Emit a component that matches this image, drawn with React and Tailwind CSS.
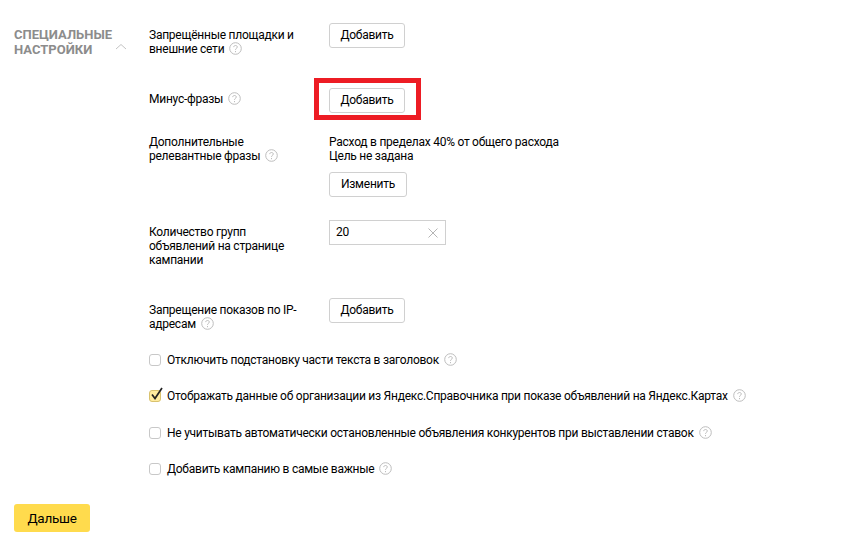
import React from "react";

const Help = ({ className = "" }) => (
  <svg width="13" height="13" viewBox="0 0 13 13" fill="none" className={`inline-block align-[-2px] ml-[5px] ${className}`}>
    <circle cx="6.5" cy="6.5" r="5.8" stroke="#bdbdbd" />
    <path d="M4.7 5.1c0-1 .8-1.6 1.8-1.6s1.8.6 1.8 1.5c0 1.400-1.800 1.300-1.800 2.800" stroke="#bdbdbd" />
    <path d="M6.500 9v1.200" stroke="#bdbdbd" />
  </svg>
);

const Btn = ({ children, className = "" }) => (
  <button className={`h-[25px] rounded-[3px] border border-[#d0d0d0] bg-white pb-[2px] text-[12px] leading-[14px] tracking-[-0.25px] text-black ${className}`}>
    {children}
  </button>
);

const Check = ({ checked, children, className = "" }) => (
  <div className={`flex h-[14px] items-center ${className}`}>
    <span className={`relative mr-[6px] h-[12px] w-[12px] shrink-0 rounded-[3px] border ${checked ? "border-[#d9c26e] bg-[#ffeba0]" : "border-[#c8c8c8] bg-white"}`}>
      {checked && (
        <svg width="16" height="16" viewBox="0 0 16 16" fill="none" className="absolute left-[-1px] top-[-5px]">
          <path d="M3 8.500L6 12.500L13 2" stroke="#222" strokeWidth="1.700" />
        </svg>
      )}
    </span>
    <span className="whitespace-nowrap">{children}</span>
  </div>
);

export default function App() {
  return (
    <div className="relative h-[539px] w-[867px] overflow-hidden bg-white font-['Roboto',sans-serif] text-[12px] leading-[14px] tracking-[-0.25px] text-black">
      <div className="flex pt-[23px]">
        <div className="relative w-[149px] shrink-0 pl-[14px] pt-[4px] text-[13px] font-bold uppercase leading-[15px] tracking-[0px] text-[#8c8c8c]">
          Специальные
          <br />
          настройки
          <svg width="12" height="7" viewBox="0 0 12 7" fill="none" className="absolute left-[115px] top-[20px]">
            <path d="M1 6L6 1.500L11 6" stroke="#c4c4c4" />
          </svg>
        </div>
        <div className="flex-1">
          <div className="flex">
            <div className="w-[180px] pt-[5px] pr-[14px]">
              Запрещённые площадки и<br />внешние сети<Help />
            </div>
            <Btn className="w-[76px]">Добавить</Btn>
          </div>
          <div className="mt-[32px] flex">
            <div className="w-[180px] pt-[4px]">
              Минус-фразы<Help />
            </div>
            <Btn className="w-[76px]">Добавить</Btn>
          </div>
          <div className="mt-[22px] flex">
            <div className="w-[180px] pr-[14px]">
              Дополнительные<br />релевантные фразы<Help />
            </div>
            <div>
              <div>Расход в пределах 40% от общего расхода</div>
              <div>Цель не задана</div>
              <Btn className="mt-[9px] w-[78px]">Изменить</Btn>
            </div>
          </div>
          <div className="mt-[23px] flex">
            <div className="w-[180px] pt-[5px] pr-[14px]">
              Количество групп<br />объявлений на странице<br />кампании
            </div>
            <div className="flex h-[25px] w-[117px] items-center justify-between border border-[#d0d0d0] pl-[6px] pr-[7px]">
              <span className="pb-[2px]">20</span>
              <svg width="10" height="10" viewBox="0 0 10 10" fill="none">
                <path d="M.5.5l9 9M9.500.5l-9 9" stroke="#b5b5b5" />
              </svg>
            </div>
          </div>
          <div className="mt-[31px] flex">
            <div className="w-[180px] pt-[5px] pr-[14px]">
              Запрещение показов по IP-<br />адресам<Help />
            </div>
            <Btn className="w-[76px]">Добавить</Btn>
          </div>
          <div className="mt-[22px] flex flex-col gap-[22.300px]">
            <Check>Отключить подстановку части текста в заголовок<Help /></Check>
            <Check checked>Отображать данные об организации из Яндекс.Справочника при показе объявлений на Яндекс.Картах<Help /></Check>
            <Check>Не учитывать автоматически остановленные объявления конкурентов при выставлении ставок<Help /></Check>
            <Check>Добавить кампанию в самые важные<Help /></Check>
          </div>
        </div>
      </div>
      <button className="ml-[14px] mt-[28px] h-[28px] w-[76px] rounded-[3px] bg-[#ffdb4d] text-[13.500px] tracking-[-0.25px] text-black">Дальше</button>
      <div className="absolute left-[314px] top-[78px] h-[42px] w-[107px] border-[5px] border-[#ed1c24]" />
    </div>
  );
}
